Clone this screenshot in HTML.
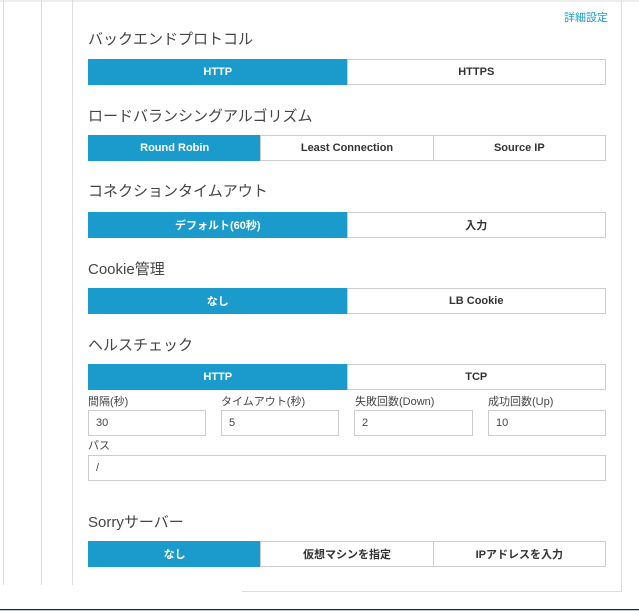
<!DOCTYPE html>
<html><head><meta charset="utf-8"><style>
*{box-sizing:border-box;margin:0;padding:0}
body{width:639px;height:611px;position:relative;background:#fff;font-family:"Liberation Sans","Noto Sans CJK JP",sans-serif;color:#333;overflow:hidden}
.v{position:absolute;top:0;width:1px;background:#ddd}
.t{position:absolute;left:88px;font-size:15px;color:#444;line-height:18px}
.bg{position:absolute;left:88px;width:518px;height:26px;display:flex}
.b{flex:1;border:1px solid #ccc;display:flex;align-items:center;justify-content:center;font-size:11px;font-weight:bold;color:#333;background:#fff;margin-left:-1px}
.b.a{background:#1a9bcb;border-color:#1a9bcb;color:#fff;margin-left:0}
.l{position:absolute;font-size:11px;color:#444;line-height:13px}
.i{position:absolute;height:26px;border:1px solid #ccc;font-size:11px;padding-left:7px;line-height:24px;color:#444}
</style></head><body>
<div style="position:absolute;left:0;top:0;width:639px;height:2px;background:#eee"></div>
<div class="v" style="left:3px;height:585px"></div>
<div class="v" style="left:41px;height:585px"></div>
<div class="v" style="left:72px;height:585px"></div>
<div class="v" style="left:621px;height:592px;background:#ddd"></div>
<div style="position:absolute;left:242px;top:591px;width:380px;height:1px;background:#ddd"></div>
<div style="position:absolute;left:0;top:609px;width:639px;height:2px;background:#222"></div>
<div style="position:absolute;left:0;top:610px;width:639px;height:1px;background:#b8cde0"></div>
<div style="position:absolute;left:564px;top:9px;font-size:11px;color:#1a9bcb">詳細設定</div>

<div class="t" style="top:31px">バックエンドプロトコル</div>
<div class="bg" style="top:59px"><div class="b a">HTTP</div><div class="b">HTTPS</div></div>

<div class="t" style="top:108px">ロードバランシングアルゴリズム</div>
<div class="bg" style="top:135px"><div class="b a">Round Robin</div><div class="b">Least Connection</div><div class="b">Source IP</div></div>

<div class="t" style="top:183px">コネクションタイムアウト</div>
<div class="bg" style="top:212px"><div class="b a">デフォルト(60秒)</div><div class="b">入力</div></div>

<div class="t" style="top:261px">Cookie管理</div>
<div class="bg" style="top:288px"><div class="b a">なし</div><div class="b">LB Cookie</div></div>

<div class="t" style="top:337px">ヘルスチェック</div>
<div class="bg" style="top:364px"><div class="b a">HTTP</div><div class="b">TCP</div></div>

<div class="l" style="left:88px;top:396px">間隔(秒)</div>
<div class="l" style="left:221px;top:396px">タイムアウト(秒)</div>
<div class="l" style="left:355px;top:396px">失敗回数(Down)</div>
<div class="l" style="left:488px;top:396px">成功回数(Up)</div>
<div class="i" style="left:88px;top:410px;width:118px">30</div>
<div class="i" style="left:221px;top:410px;width:118px">5</div>
<div class="i" style="left:354px;top:410px;width:119px">2</div>
<div class="i" style="left:488px;top:410px;width:118px">10</div>
<div class="l" style="left:88px;top:440px">パス</div>
<div class="i" style="left:88px;top:455px;width:518px">/</div>

<div class="t" style="top:514px">Sorryサーバー</div>
<div class="bg" style="top:541px"><div class="b a">なし</div><div class="b">仮想マシンを指定</div><div class="b">IPアドレスを入力</div></div>
</body></html>
